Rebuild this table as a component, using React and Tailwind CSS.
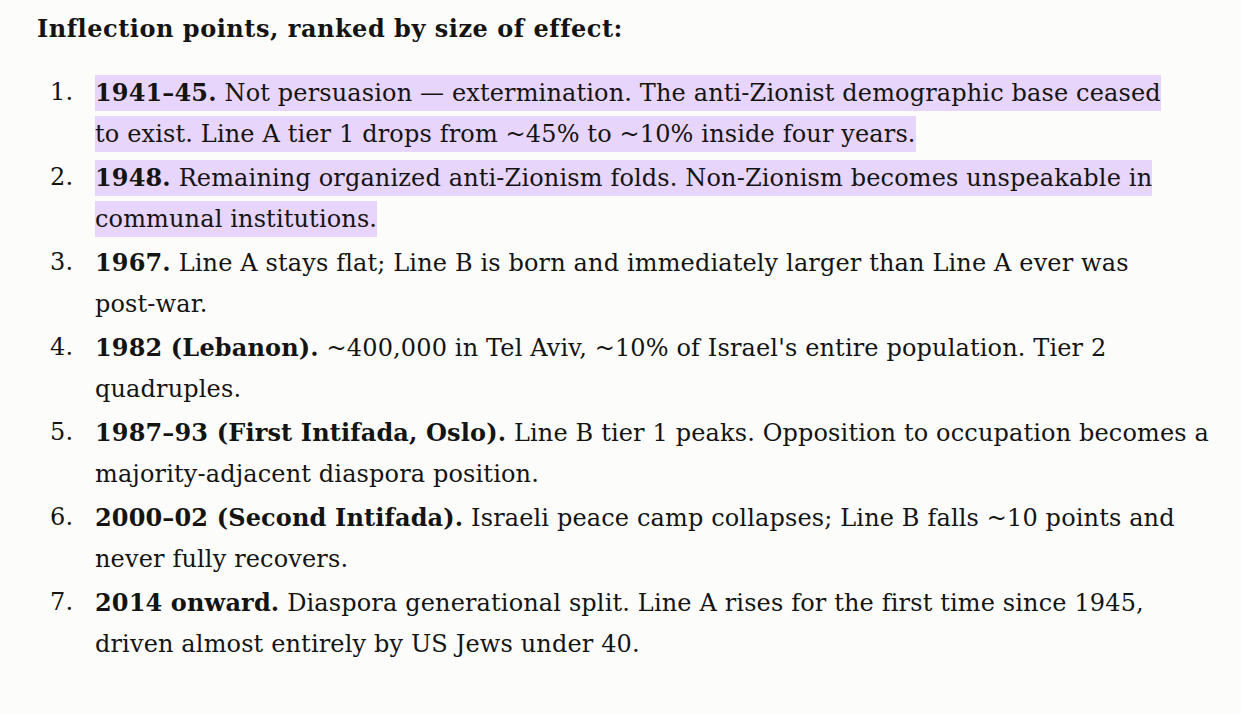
import React from 'react';

// line breaks follow the reference layout
const items = [
  {
    lead: '1941–45.',
    lines: [
      'Not persuasion — extermination. The anti-Zionist demographic base ceased',
      'to exist. Line A tier 1 drops from ~45% to ~10% inside four years.',
    ],
    marked: true,
  },
  {
    lead: '1948.',
    lines: [
      'Remaining organized anti-Zionism folds. Non-Zionism becomes unspeakable in',
      'communal institutions.',
    ],
    marked: true,
  },
  {
    lead: '1967.',
    lines: ['Line A stays flat; Line B is born and immediately larger than Line A ever was', 'post-war.'],
  },
  {
    lead: '1982 (Lebanon).',
    lines: ["~400,000 in Tel Aviv, ~10% of Israel's entire population. Tier 2", 'quadruples.'],
  },
  {
    lead: '1987–93 (First Intifada, Oslo).',
    lines: ['Line B tier 1 peaks. Opposition to occupation becomes a', 'majority-adjacent diaspora position.'],
  },
  {
    lead: '2000–02 (Second Intifada).',
    lines: ['Israeli peace camp collapses; Line B falls ~10 points and', 'never fully recovers.'],
  },
  {
    lead: '2014 onward.',
    lines: [
      'Diaspora generational split. Line A rises for the first time since 1945,',
      'driven almost entirely by US Jews under 40.',
    ],
  },
];

export default function App() {
  return (
    <div className="min-h-screen bg-[#fcfcfb] px-[37px] pt-[8px] font-['DejaVu_Serif',serif] text-[24px] tracking-[0.006em] text-[#141413]">
      <p className="font-bold leading-[41px] tracking-[0.022em]">Inflection points, ranked by size of effect:</p>
      <ol className="mt-[23px] flex flex-col gap-[2px] leading-[41px]">
        {items.map((item, i) => (
          <li key={i} className="flex">
            <span className="w-[58px] shrink-0 pl-[13px]">{i + 1}.</span>
            <p className="min-w-0 flex-1 whitespace-nowrap">
              <span className={item.marked ? 'bg-[#e8d5fc] py-[4px] box-decoration-clone' : ''}>
                <strong className="font-bold">{item.lead}</strong> {item.lines[0]}
                <br />
                {item.lines[1]}
              </span>
            </p>
          </li>
        ))}
      </ol>
    </div>
  );
}
